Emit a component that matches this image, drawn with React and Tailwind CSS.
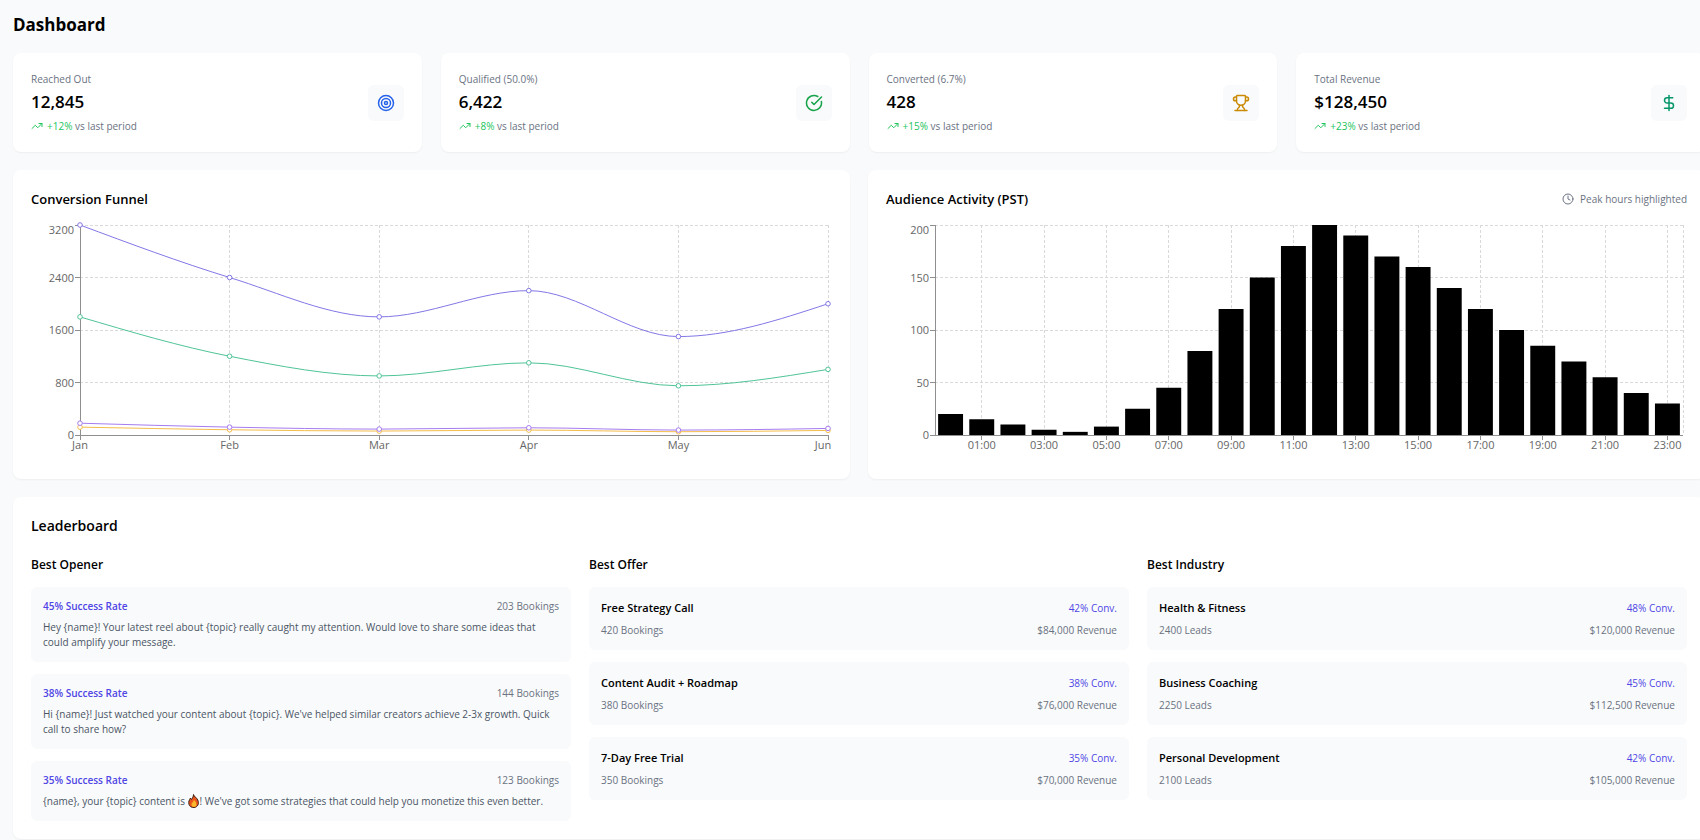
import React, { useState, useLayoutEffect, useRef } from "react";
import {
  Target,
  CircleCheckBig,
  Trophy,
  DollarSign,
  TrendingUp,
  Clock,
} from "lucide-react";

const stats = [
  {
    label: "Reached Out",
    value: "12,845",
    change: "+12%",
    icon: Target,
    color: "text-[#2563eb]",
  },
  {
    label: "Qualified (50.0%)",
    value: "6,422",
    change: "+8%",
    icon: CircleCheckBig,
    color: "text-[#16a34a]",
  },
  {
    label: "Converted (6.7%)",
    value: "428",
    change: "+15%",
    icon: Trophy,
    color: "text-[#ca8a04]",
  },
  {
    label: "Total Revenue",
    value: "$128,450",
    change: "+23%",
    icon: DollarSign,
    color: "text-[#059669]",
  },
];

const months = ["Jan", "Feb", "Mar", "Apr", "May", "Jun"];

const funnelSeries = [
  { name: "reached", color: "#8277e6", values: [3200, 2400, 1800, 2200, 1500, 2000] },
  { name: "qualified", color: "#4fc498", values: [1800, 1200, 900, 1100, 750, 1000] },
  { name: "converted", color: "#f5bd4c", values: [120, 80, 60, 75, 50, 70] },
  { name: "booked", color: "#a67cf0", values: [180, 120, 90, 110, 75, 100] },
];

const hourlyActivity = [
  20, 15, 10, 5, 3, 8, 25, 45, 80, 120, 150, 180, 200, 190, 170, 160, 140, 120,
  100, 85, 70, 55, 40, 30,
];

const openers = [
  {
    rate: "45%",
    bookings: 203,
    text: "Hey {name}! Your latest reel about {topic} really caught my attention. Would love to share some ideas that could amplify your message.",
  },
  {
    rate: "38%",
    bookings: 144,
    text: "Hi {name}! Just watched your content about {topic}. We've helped similar creators achieve 2-3x growth. Quick call to share how?",
  },
  {
    rate: "35%",
    bookings: 123,
    text: (
      <>
        {"{name}, your {topic} content is "}
        <FireIcon />
        {"! We've got some strategies that could help you monetize this even better."}
      </>
    ),
  },
];

const offers = [
  { name: "Free Strategy Call", count: "420 Bookings", conv: "42%", revenue: "$84,000" },
  { name: "Content Audit + Roadmap", count: "380 Bookings", conv: "38%", revenue: "$76,000" },
  { name: "7-Day Free Trial", count: "350 Bookings", conv: "35%", revenue: "$70,000" },
];

const industries = [
  { name: "Health & Fitness", count: "2400 Leads", conv: "48%", revenue: "$120,000" },
  { name: "Business Coaching", count: "2250 Leads", conv: "45%", revenue: "$112,500" },
  { name: "Personal Development", count: "2100 Leads", conv: "42%", revenue: "$105,000" },
];

// plot area inside the chart svg
const CHART_HEIGHT = 240;
const PLOT = { top: 4, bottom: 214, left: 49, right: 4 };

function FireIcon() {
  return (
    <svg
      role="img"
      aria-label="fire"
      viewBox="0 0 24 28"
      className="inline-block h-3.5 w-3 align-text-bottom"
    >
      <path
        d="M11 1c1 4 6 6 8.500 11 3 6.500 1 14-7.500 15C4 27.500 0 21 2 14c.6-2.300 2-4 3-6 .6 1.500 1 2.500 2 3 2-3 4-6 4-10z"
        fill="#e8541c"
        stroke="#3b1d10"
        strokeWidth="2"
      />
      <path
        d="M12 11c.5 3 5 5 5 9.500 0 3.500-2 5.500-5 5.500s-5-2-5-5c0-4 4.500-5 5-10z"
        fill="#fbb62a"
      />
    </svg>
  );
}

function useWidth() {
  const ref = useRef(null);
  const [width, setWidth] = useState(0);

  useLayoutEffect(() => {
    const update = () => setWidth(ref.current.clientWidth);
    update();
    const observer = new ResizeObserver(update);
    observer.observe(ref.current);
    return () => observer.disconnect();
  }, []);

  return [ref, width];
}

// Monotone cubic interpolation, same shape as d3's curveMonotoneX
function monotonePath(points) {
  const n = points.length;
  const slope = (i) =>
    (points[i + 1].y - points[i].y) / (points[i + 1].x - points[i].x);
  const tangents = points.map((p, i) => {
    if (i === 0 || i === n - 1) return 0;
    const s0 = slope(i - 1);
    const s1 = slope(i);
    return (
      (Math.sign(s0) + Math.sign(s1)) *
      Math.min(Math.abs(s0), Math.abs(s1), Math.abs((s0 + s1) / 4))
    );
  });
  tangents[0] = (3 * slope(0) - tangents[1]) / 2;
  tangents[n - 1] = (3 * slope(n - 2) - tangents[n - 2]) / 2;

  let d = `M${points[0].x},${points[0].y}`;
  for (let i = 1; i < n; i++) {
    const a = points[i - 1];
    const b = points[i];
    const dx = (b.x - a.x) / 3;
    d += `C${a.x + dx},${a.y + dx * tangents[i - 1]},${b.x - dx},${
      b.y - dx * tangents[i]
    },${b.x},${b.y}`;
  }
  return d;
}

const ChartFrame = ({ width, max, xTicks, children }) => {
  const right = width - PLOT.right;
  const plotHeight = PLOT.bottom - PLOT.top;
  const yTicks = [0, 1, 2, 3, 4].map((i) => ({
    value: (max / 4) * i,
    y: PLOT.bottom - (plotHeight / 4) * i,
  }));

  return (
    <svg width={width} height={CHART_HEIGHT} className="block">
      <g stroke="#d9d9d9" strokeDasharray="3 2" shapeRendering="crispEdges">
        {yTicks.map((t) => (
          <line key={t.value} x1={PLOT.left} x2={right} y1={t.y} y2={t.y} />
        ))}
        {xTicks.map((t) => (
          <line key={t.label} x1={t.x} x2={t.x} y1={PLOT.top} y2={PLOT.bottom} />
        ))}
        <line x1={right} x2={right} y1={PLOT.top} y2={PLOT.bottom} />
      </g>
      <g stroke="#8f8f8f" shapeRendering="crispEdges">
        <line x1={PLOT.left} x2={PLOT.left} y1={PLOT.top} y2={PLOT.bottom} />
        <line x1={PLOT.left} x2={right} y1={PLOT.bottom} y2={PLOT.bottom} />
        {yTicks.map((t) => (
          <line key={t.value} x1={PLOT.left - 5} x2={PLOT.left} y1={t.y} y2={t.y} />
        ))}
        {xTicks.map((t) => (
          <line key={t.label} x1={t.x} x2={t.x} y1={PLOT.bottom} y2={PLOT.bottom + 5} />
        ))}
      </g>
      <g className="fill-[#666666] text-[11px]">
        {yTicks.map((t) => (
          <text
            key={t.value}
            x={PLOT.left - 6}
            y={Math.max(t.y, 9) + 4}
            textAnchor="end"
          >
            {t.value}
          </text>
        ))}
        {xTicks.map((t) => (
          <text
            key={t.label}
            x={Math.min(t.x, width - 9)}
            y={PLOT.bottom + 14}
            textAnchor="middle"
          >
            {t.label}
          </text>
        ))}
      </g>
      {children}
    </svg>
  );
};

const FunnelChart = () => {
  const [ref, width] = useWidth();
  const step = (width - PLOT.left - PLOT.right) / (months.length - 1);
  const xTicks = months.map((label, i) => ({ label, x: PLOT.left + step * i }));

  return (
    <div ref={ref} className="min-w-0">
      {width > 0 && (
        <ChartFrame width={width} max={3200} xTicks={xTicks}>
          {funnelSeries.map((series) => {
            const points = series.values.map((v, i) => ({
              x: xTicks[i].x,
              y: PLOT.bottom - (v / 3200) * (PLOT.bottom - PLOT.top),
            }));
            return (
              <g key={series.name} stroke={series.color}>
                <path d={monotonePath(points)} fill="none" />
                {points.map((p) => (
                  <circle key={p.x} cx={p.x} cy={p.y} r="2.3" fill="#fff" />
                ))}
              </g>
            );
          })}
        </ChartFrame>
      )}
    </div>
  );
};

const ActivityChart = () => {
  const [ref, width] = useWidth();
  const band = (width - PLOT.left - PLOT.right) / hourlyActivity.length;
  const xTicks = hourlyActivity
    .map((_, hour) => ({
      label: `${String(hour).padStart(2, "0")}:00`,
      x: PLOT.left + band * (hour + 0.5),
    }))
    .filter((_, hour) => hour % 2 === 1);

  return (
    <div ref={ref} className="min-w-0">
      {width > 0 && (
        <ChartFrame width={width} max={200} xTicks={xTicks}>
          {hourlyActivity.map((v, hour) => {
            const height = (v / 200) * (PLOT.bottom - PLOT.top);
            return (
              <rect
                key={hour}
                x={PLOT.left + band * (hour + 0.1)}
                y={PLOT.bottom - height}
                width={band * 0.8}
                height={height}
                fill="#000"
              />
            );
          })}
        </ChartFrame>
      )}
    </div>
  );
};

const StatCard = ({ stat }) => {
  const Icon = stat.icon;
  return (
    <div className="flex items-center justify-between rounded-lg bg-white p-[18px] shadow-xs">
      <div>
        <p className="text-[10px] leading-4 text-gray-500">{stat.label}</p>
        <p className="mt-[3px] text-[17px] leading-6 font-semibold">{stat.value}</p>
        <p className="mt-1 flex items-center gap-1 text-[10px] leading-4 text-gray-500">
          <TrendingUp className="size-3 text-[#22c55e]" />
          <span>
            <span className="text-[#22c55e]">{stat.change}</span> vs last period
          </span>
        </p>
      </div>
      <div className="rounded-md bg-[#f9fafb] p-[9px]">
        <Icon className={`size-[18px] ${stat.color}`} />
      </div>
    </div>
  );
};

const ResultList = ({ title, items }) => (
  <div>
    <h3 className="mb-3 text-[12px] leading-5 font-semibold">{title}</h3>
    <div className="space-y-3">
      {items.map((item) => (
        <div key={item.name} className="rounded-md bg-[#f9fafb] p-3">
          <div className="flex items-center justify-between">
            <span className="text-[11px] leading-[18px] font-semibold">
              {item.name}
            </span>
            <span className="text-[10px] leading-[15px] text-[#4f46e5]">
              {item.conv} Conv.
            </span>
          </div>
          <div className="mt-1.5 flex justify-between text-[10px] leading-[15px] text-gray-500">
            <span>{item.count}</span>
            <span>{item.revenue} Revenue</span>
          </div>
        </div>
      ))}
    </div>
  </div>
);

const App = () => {
  return (
    <div className="min-h-screen overflow-x-hidden bg-[#f9fafb] pl-[13px] font-['Open_Sans','Noto_Sans',sans-serif] text-black">
      <div className="-mr-[5px] pt-3">
        <h1 className="text-[17px] leading-[26px] font-bold">Dashboard</h1>

        <div className="mt-[15px] grid grid-cols-4 gap-[19px]">
          {stats.map((stat) => (
            <StatCard key={stat.label} stat={stat} />
          ))}
        </div>

        <div className="mt-[18px] grid grid-cols-2 gap-[18px]">
          <div className="min-w-0 rounded-lg bg-white p-[18px] shadow-xs">
            <h2 className="mb-[11px] text-[13px] leading-[22px] font-semibold">
              Conversion Funnel
            </h2>
            <FunnelChart />
          </div>
          <div className="min-w-0 rounded-lg bg-white p-[18px] shadow-xs">
            <div className="mb-[11px] flex items-center justify-between">
              <h2 className="text-[13px] leading-[22px] font-semibold">
                Audience Activity (PST)
              </h2>
              <div className="flex items-center gap-1.5 text-[10px] leading-[14px] text-gray-500">
                <Clock className="size-3" />
                Peak hours highlighted
              </div>
            </div>
            <ActivityChart />
          </div>
        </div>

        <div className="mt-[18px] rounded-lg bg-white p-[18px] shadow-xs">
          <h2 className="mb-[18px] text-[14px] leading-[22px] font-semibold">
            Leaderboard
          </h2>
          <div className="grid grid-cols-3 gap-[18px]">
            <div>
              <h3 className="mb-3 text-[12px] leading-5 font-semibold">
                Best Opener
              </h3>
              <div className="space-y-3">
                {openers.map((opener) => (
                  <div key={opener.rate} className="rounded-md bg-[#f9fafb] p-3">
                    <div className="flex justify-between text-[10px] leading-[15px]">
                      <span className="font-semibold text-[#4f46e5]">
                        {opener.rate} Success Rate
                      </span>
                      <span className="text-gray-500">
                        {opener.bookings} Bookings
                      </span>
                    </div>
                    <p className="mt-1.5 text-[10px] leading-[15px] text-gray-600">
                      {opener.text}
                    </p>
                  </div>
                ))}
              </div>
            </div>
            <ResultList title="Best Offer" items={offers} />
            <ResultList title="Best Industry" items={industries} />
          </div>
        </div>
      </div>
    </div>
  );
};

export default App;
